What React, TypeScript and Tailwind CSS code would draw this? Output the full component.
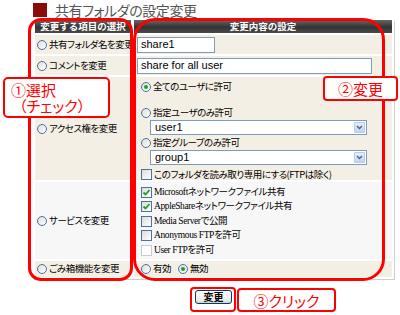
const jp = "font-['Noto_Sans_CJK_JP',sans-serif] [font-feature-settings:'palt']";
const serif = "font-['Liberation_Serif','Noto_Sans_CJK_JP',serif] [font-feature-settings:'palt']";

function Radio({ checked = false }: { checked?: boolean }) {
  return (
    <span className="flex h-[10px] w-[10px] shrink-0 items-center justify-center rounded-full border border-[#4a72a8] bg-[linear-gradient(135deg,#dcdcd6,#ffffff)]">
      {checked && <span className="h-[4px] w-[4px] rounded-full bg-[#21a121]" />}
    </span>
  );
}

function Check({ checked = false, disabled = false }: { checked?: boolean; disabled?: boolean }) {
  return (
    <span
      className={`flex h-[11px] w-[11px] shrink-0 items-center justify-center border ${
        disabled ? 'border-[#cacaca] bg-white' : 'border-[#4a72a8] bg-[linear-gradient(135deg,#dcdcd6,#ffffff)]'
      }`}
    >
      {checked && (
        <svg width="9" height="9" viewBox="0 0 9 9">
          <polyline points="1.5,4.5 3.5,6.5 7.5,2" fill="none" stroke="#21a121" strokeWidth="1.8" />
        </svg>
      )}
    </span>
  );
}

function Select({ value }: { value: string }) {
  return (
    <div className="ml-[16px] flex h-[15px] w-[217px] items-center border border-[#7f9db9] bg-white pl-[4px]">
      <span className="flex-1 font-['Liberation_Sans',sans-serif] text-[11px] leading-none text-black">{value}</span>
      <span className="mr-px flex h-[11px] w-[11px] items-center justify-center rounded-[1px] border border-[#b6cbef] bg-[linear-gradient(#e6eefc,#c2d3f8)]">
        <svg width="7" height="5" viewBox="0 0 7 5">
          <polyline points="1,1 3.5,3.5 6,1" fill="none" stroke="#4d6185" strokeWidth="1.4" />
        </svg>
      </span>
    </div>
  );
}

const txt = `${jp} text-[9.5px] tracking-[-0.5px] leading-none text-black`;
const stxt = `${serif} text-[9.5px] tracking-[-0.4px] leading-none text-black`;

function LeftCell({ label, tall = '', bg = 'bg-[#f4efe5]' }: { label: string; tall?: string; bg?: string }) {
  return (
    <div className={`flex items-center gap-[2px] overflow-hidden whitespace-nowrap pl-[2px] ${bg} ${tall}`}>
      <Radio />
      <span className={txt}>{label}</span>
    </div>
  );
}

function Line({ children, h = 'h-[13px]', mt = '' }: { children: React.ReactNode; h?: string; mt?: string }) {
  return (
    <div className={`flex items-center gap-[2px] whitespace-nowrap pl-[7px] ${h} ${mt}`}>{children}</div>
  );
}

export default function App() {
  return (
    <div className="relative h-[315px] w-[400px] overflow-hidden bg-white">
      <div className="flex h-[20px] items-center gap-[8px] pl-[33px]">
        <span className="h-[14px] w-[14px] bg-[#8b0a0a]" />
        <span className={`${jp} text-[14px] tracking-[-0.4px] leading-none text-[#555]`}>共有フォルダの設定変更</span>
      </div>

      <div className="ml-[33px] grid w-[361px] grid-cols-[96px_258px] gap-x-[3px] gap-y-[2px] bg-white px-[2px] pb-[2px] shadow-[1px_1px_0_#cfcfcf]">
        <div className="flex h-[13px] items-center justify-center bg-[linear-gradient(#666,#333_55%,#4a4a4a)] font-['Noto_Sans_CJK_JP',sans-serif] text-[9.5px] font-bold leading-none text-white">
          変更する項目の選択
        </div>
        <div className="flex h-[13px] items-center justify-center bg-[linear-gradient(#666,#333_55%,#4a4a4a)] font-['Noto_Sans_CJK_JP',sans-serif] text-[9.5px] font-bold leading-none text-white">
          変更内容の設定
        </div>

        <LeftCell label="共有フォルダ名を変更" tall="h-[19px]" />
        <div className="flex h-[19px] items-center bg-[#f4efe5] pl-[3px]">
          <div className="flex h-[16px] w-[78px] items-center border border-[#7f9db9] bg-white pl-[3px] font-['Liberation_Sans',sans-serif] text-[11px] text-black">
            share1
          </div>
        </div>

        <LeftCell label="コメントを変更" tall="h-[19px]" />
        <div className="flex h-[19px] items-center bg-[#f4efe5] pl-[3px]">
          <div className="flex h-[16px] w-[235px] items-center border border-[#7f9db9] bg-white pl-[3px] font-['Liberation_Sans',sans-serif] text-[11px] text-black">
            share for all user
          </div>
        </div>

        <LeftCell label="アクセス権を変更" tall="h-[103px]" />
        <div className="flex h-[103px] flex-col bg-[#f4efe5]">
          <Line mt="mt-[3px]">
            <Radio checked />
            <span className={txt}>全てのユーザに許可</span>
          </Line>
          <Line mt="mt-[13px]">
            <Radio />
            <span className={txt}>指定ユーザのみ許可</span>
          </Line>
          <div className="mt-px">
            <Select value="user1" />
          </div>
          <Line mt="mt-px">
            <Radio />
            <span className={txt}>指定グループのみ許可</span>
          </Line>
          <div className="mt-px">
            <Select value="group1" />
          </div>
          <Line mt="mt-[4px]" h="h-[11px]">
            <Check />
            <span className={txt}>このフォルダを読み取り専用にする(FTPは除く)</span>
          </Line>
        </div>

        <LeftCell label="サービスを変更" tall="h-[77px]" bg="bg-[#f7f7f7]" />
        <div className="flex h-[77px] flex-col bg-[#f7f7f7] pt-[3px]">
          <Line h="h-[14.5px]">
            <Check checked />
            <span className={stxt}>Microsoftネットワークファイル共有</span>
          </Line>
          <Line h="h-[14.5px]">
            <Check checked />
            <span className={stxt}>AppleShareネットワークファイル共有</span>
          </Line>
          <Line h="h-[14.5px]">
            <Check />
            <span className={stxt}>Media Serverで公開</span>
          </Line>
          <Line h="h-[14.5px]">
            <Check />
            <span className={stxt}>Anonymous FTPを許可</span>
          </Line>
          <Line h="h-[14.5px]">
            <Check disabled />
            <span className={stxt}>User FTPを許可</span>
          </Line>
        </div>

        <LeftCell label="ごみ箱機能を変更" tall="h-[16px]" />
        <div className="flex h-[16px] items-center gap-[2px] bg-[#f4efe5] pl-[7px]">
          <Radio />
          <span className={txt}>有効</span>
          <span className="w-[3px]" />
          <Radio checked />
          <span className={txt}>無効</span>
        </div>
      </div>

      <div className="mt-[11px] flex w-[427px] justify-center">
        <button className="flex h-[14px] w-[37px] items-center justify-center rounded-[3px] border border-[#003c74] bg-[linear-gradient(#ffffff,#ecebe6_80%,#d6d0c5)] font-['Noto_Sans_CJK_JP',sans-serif] text-[10px] font-bold leading-none text-black">
          変更
        </button>
      </div>

      <div className="absolute left-[28px] top-[18px] h-[263px] w-[105px] rounded-[13px] border-[3px] border-[#ff0000]" />
      <div className="absolute left-[133px] top-[18px] h-[263px] w-[252px] rounded-[22px] border-[3px] border-[#ff0000]" />

      <div className={`absolute left-[3px] top-[77px] flex h-[41px] w-[107px] flex-col justify-center rounded-[5px] border-[2.5px] border-[#ff0000] bg-white pl-[6px] ${jp} text-[15px] leading-[16px] text-[#ff0000]`}>
        <span>①選択</span>
        <span className="pl-[8px]">（チェック）</span>
      </div>
      <div className={`absolute left-[323px] top-[76px] flex h-[25px] w-[75px] items-center justify-center rounded-[4px] border-[2.5px] border-[#ff0000] bg-white ${jp} text-[15px] leading-none text-[#ff0000]`}>
        ②変更
      </div>
      <div className="absolute left-[190px] top-[287px] h-[25px] w-[46px] rounded-[4px] border-[2.5px] border-[#ff0000]" />
      <div className={`absolute left-[237px] top-[288px] flex h-[24px] w-[99px] items-center justify-center rounded-[4px] border-[2.5px] border-[#ff0000] bg-white ${jp} text-[15px] leading-none text-[#ff0000]`}>
        ③クリック
      </div>
    </div>
  );
}
